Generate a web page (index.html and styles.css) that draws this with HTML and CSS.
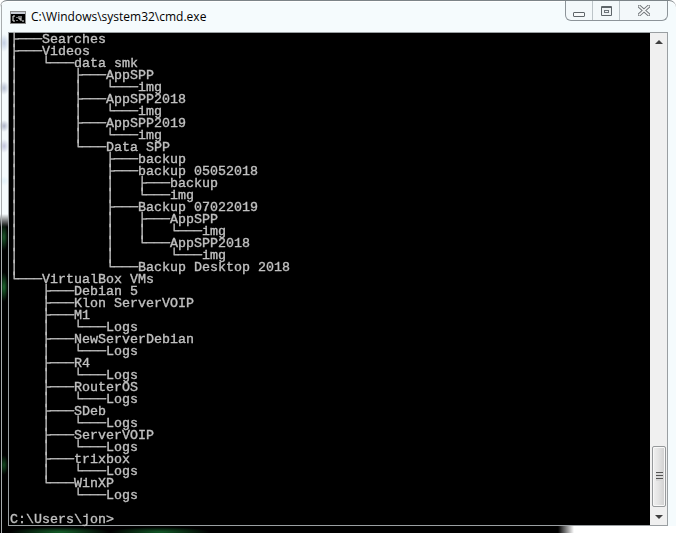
FILE: index.html
```html
<!DOCTYPE html>
<html lang="en">
<head>
<meta charset="utf-8">
<title>C:\Windows\system32\cmd.exe</title>
<link rel="stylesheet" href="styles.css">
</head>
<body>
<div class="window">
  <header class="titlebar">
    <svg class="app-icon" width="16" height="13" viewBox="0 0 16 13">
      <rect x="0.5" y="0.5" width="15" height="12" fill="#000" stroke="#8a8a8a"/>
      <rect x="1" y="1" width="14" height="2" fill="#c8ccd4"/>
      <path d="M5 5H3v5h2M7 6v1M7 9v1M9 5v3h2M11 5v5M12 10h2" fill="none" stroke="#eee" stroke-width="1"/>
    </svg>
    <span class="title">C:\Windows\system32\cmd.exe</span>
    <div class="controls">
      <div class="ctl ctl-min"><span class="min-glyph"></span></div>
      <div class="ctl ctl-max"><span class="max-glyph"></span></div>
      <div class="ctl ctl-close">
        <svg width="12" height="11" viewBox="0 0 12 11">
          <path d="M1.5 1.5 10.5 9.5M10.5 1.5 1.5 9.5" stroke="#6f7478" stroke-width="3.4" stroke-linecap="square"/>
          <path d="M1.5 1.5 10.5 9.5M10.5 1.5 1.5 9.5" stroke="#f4f6f7" stroke-width="1.6" stroke-linecap="square"/>
        </svg>
      </div>
    </div>
  </header>
  <main class="client">
    <div class="screen">
<pre class="console">├───Searches
├───Videos
│   └───data smk
│       ├───AppSPP
│       │   └───img
│       ├───AppSPP2018
│       │   └───img
│       ├───AppSPP2019
│       │   └───img
│       └───Data SPP
│           ├───backup
│           ├───backup 05052018
│           │   ├───backup
│           │   └───img
│           ├───Backup 07022019
│           │   ├───AppSPP
│           │   │   └───img
│           │   └───AppSPP2018
│           │       └───img
│           └───Backup Desktop 2018
└───VirtualBox VMs
    ├───Debian 5
    ├───Klon ServerVOIP
    ├───M1
    │   └───Logs
    ├───NewServerDebian
    │   └───Logs
    ├───R4
    │   └───Logs
    ├───RouterOS
    │   └───Logs
    ├───SDeb
    │   └───Logs
    ├───ServerVOIP
    │   └───Logs
    ├───trixbox
    │   └───Logs
    └───WinXP
        └───Logs

C:\Users\jon&gt;</pre>
    </div>
    <aside class="scrollbar">
      <div class="arrow arrow-up"></div>
      <div class="track">
        <div class="thumb"><span class="grip"></span></div>
      </div>
      <div class="arrow arrow-down"></div>
    </aside>
  </main>
</div>
</body>
</html>
```
FILE: styles.css
```css
html, body {
  margin: 0;
  padding: 0;
  background: #fff;
}

.window {
  box-sizing: border-box;
  width: 676px;
  height: 533px;
  padding: 0 8px 7px;
  display: flex;
  flex-direction: column;
  overflow: hidden;
  border-radius: 7px 7px 0 0;
  border-top: 1px solid #7c8488;
  box-shadow: inset 0 1px 0 #fff;
  background-color: #f5fbfd;
  background-image:
    linear-gradient(#a8acae, #a8acae),
    radial-gradient(ellipse 5px 9px at 4px 42px, #c3cfe4, transparent),
    radial-gradient(ellipse 5px 7px at 4px 87px, #b6bfd2, transparent),
    radial-gradient(ellipse 5px 6px at 4px 125px, #aeb4c8, transparent),
    radial-gradient(ellipse 5px 7px at 4px 145px, #c2c4dc, transparent),
    radial-gradient(ellipse 5px 5px at 4px 180px, #e2f2fa, transparent),
    radial-gradient(ellipse 4px 14px at 4px 236px, #1c5a2c, transparent),
    radial-gradient(ellipse 4px 15px at 4px 286px, #1d6a30, transparent),
    radial-gradient(ellipse 4px 10px at 4px 464px, #124a20, transparent),
    radial-gradient(ellipse 50px 5px at 60px 531px, #14602a, transparent),
    radial-gradient(ellipse 50px 5px at 160px 531px, #125a28, transparent),
    linear-gradient(to right, #000 558px, #fff 574px),
    linear-gradient(to bottom, transparent 213px, #000 226px);
  background-repeat: no-repeat;
  background-size:
    1px 100%,
    auto, auto, auto, auto, auto, auto, auto, auto, auto, auto,
    100% 7px,
    8px 100%;
  background-position:
    1px 0,
    0 0, 0 0, 0 0, 0 0, 0 0, 0 0, 0 0, 0 0, 0 0, 0 0,
    0 100%,
    0 0;
}

.titlebar {
  height: 31px;
  flex: none;
  display: flex;
  align-items: flex-start;
}

.app-icon {
  margin: 10px 0 0 2px;
  flex: none;
}

.title {
  margin: 8px 0 0 5px;
  font: 12px/16px "Open Sans", "Noto Sans", sans-serif;
  color: #000;
  white-space: nowrap;
}

.controls {
  margin: 0 0 0 auto;
  display: flex;
  box-sizing: border-box;
  height: 20px;
  border: 1px solid #8d9499;
  border-top: 0;
  border-radius: 0 0 6px 6px;
  background: #f3f8fa;
}

.ctl {
  display: flex;
  align-items: center;
  justify-content: center;
  box-sizing: border-box;
  height: 100%;
}

.ctl-min {
  width: 27px;
  border-right: 1px solid #bcc4c8;
}

.ctl-max {
  width: 27px;
  border-right: 1px solid #bcc4c8;
}

.ctl-close {
  width: 47px;
}

.min-glyph {
  width: 10px;
  height: 3px;
  margin-top: 7px;
  border: 1px solid #5e6569;
  background: #f7f9fa;
  border-radius: 1px;
}

.max-glyph {
  box-sizing: border-box;
  width: 11px;
  height: 10px;
  margin-top: 1px;
  border: 1px solid #5e6569;
  border-top-width: 2px;
  background: #eef2f4;
  position: relative;
  border-radius: 1px;
  box-shadow: inset 0 0 0 2px #eef2f4, inset 0 0 0 3px #6e757a;
}

.client {
  flex: 1;
  min-height: 0;
  display: flex;
  border: 1px solid #9a9fa2;
}

.screen {
  flex: 1;
  min-width: 0;
  background: #000;
}

.console {
  margin: 0;
  padding: 1px 0 0 1px;
  height: 491px;
  will-change: transform;
  color: #c0c0c0;
  font: 13.33px/12px "Liberation Mono", monospace;
  -webkit-text-stroke: 0.35px #c0c0c0;
}

.scrollbar {
  width: 17px;
  flex: none;
  display: flex;
  flex-direction: column;
  background: #f0f0f0;
}

.arrow {
  height: 17px;
  flex: none;
  display: flex;
  align-items: center;
  justify-content: center;
}

.arrow::before {
  content: "";
  width: 0;
  height: 0;
  border-left: 4px solid transparent;
  border-right: 4px solid transparent;
}

.arrow-up::before {
  border-bottom: 4px solid #404040;
}

.arrow-down::before {
  border-top: 4px solid #404040;
}

.track {
  flex: 1;
  display: flex;
  flex-direction: column;
  justify-content: flex-end;
}

.thumb {
  box-sizing: border-box;
  height: 61px;
  margin: 0 1px 1px 2px;
  display: flex;
  align-items: center;
  justify-content: center;
  border: 1px solid #979a9c;
  border-radius: 2px;
  background: linear-gradient(to right, #f0f0f0, #e4e4e4 45%, #cfcfcf);
  box-shadow: inset 0 0 0 1px #f8f8f8;
}

.grip {
  width: 7px;
  height: 9px;
  background: repeating-linear-gradient(to bottom, #555 0 1px, #d8d8d8 1px 3px);
}
```
